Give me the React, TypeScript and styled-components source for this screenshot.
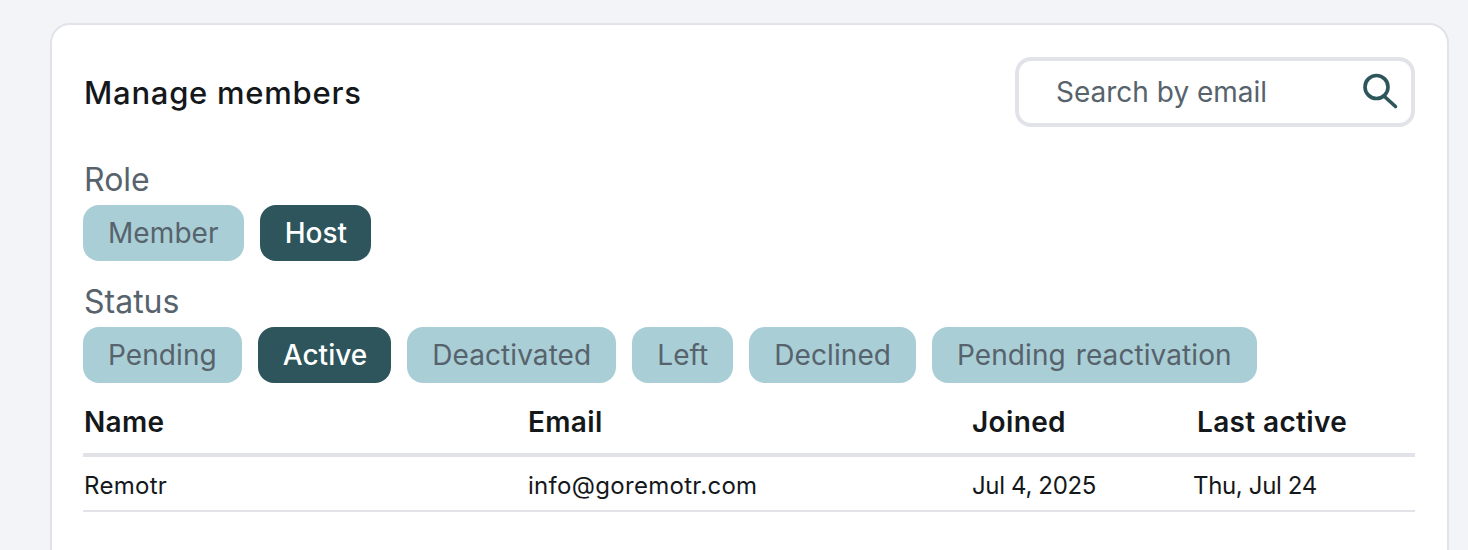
import React from "react";
import styled, { createGlobalStyle } from "styled-components";

const Global = createGlobalStyle`
  html, body { margin: 0; padding: 0; background: #f2f4f8; height: 550px; overflow: hidden; }
  body { font-family: Inter, "Noto Sans", sans-serif; }
`;
const Page = styled.div`
  padding: 23px 19px 0 50px;
  height: 527px;
  overflow: hidden;
`;
const Card = styled.section`
  box-sizing: border-box;
  height: 600px;
  background: #fff;
  border: 2px solid #e1e3e9;
  border-radius: 20px;
  padding: 32px 32px 0 31px;
`;
const Header = styled.header`
  display: flex;
  justify-content: space-between;
  align-items: center;
  height: 70px;
`;
const Title = styled.h1`
  margin: 2px 0 0 1px;
  font-size: 31px;
  line-height: 36px;
  font-weight: 500;
  letter-spacing: 0.75px;
  color: #14181b;
`;
const Search = styled.div`
  box-sizing: border-box;
  width: 400px;
  height: 70px;
  border: 4px solid #e1e3e9;
  border-radius: 16px;
  display: flex;
  align-items: center;
  justify-content: space-between;
  padding: 0 14px 0 37px;
`;
const SearchIcon = styled.svg`
  flex: none;
  overflow: visible;
`;
const Placeholder = styled.span`
  font-size: 28px;
  color: #57636c;
`;
const FilterLabel = styled.div`
  margin: 0 0 0 1px;
  font-size: 32px;
  line-height: 36px;
  color: #57636c;
`;
const Filter = styled.div<{ $top: number }>`
  margin-top: ${(p) => p.$top}px;
`;
const Chips = styled.div`
  display: flex;
  gap: 16px;
  margin-top: 7px;
`;
const Chip = styled.div<{ $on?: boolean }>`
  height: 56px;
  display: flex;
  align-items: center;
  padding: ${(p) => (p.$on ? "0 24px 0 25px" : "0 25px")};
  border-radius: 16px;
  font-size: 28px;
  letter-spacing: ${(p) => (p.$on ? 0 : 0.08)}px;
  word-spacing: 2px;
  background: ${(p) => (p.$on ? "#2d555b" : "#a9ced6")};
  color: ${(p) => (p.$on ? "#fff" : "#57636c")};
  font-weight: ${(p) => (p.$on ? 500 : 400)};
`;
const Row = styled.div<{ $cols: string; $head?: boolean }>`
  display: grid;
  grid-template-columns: ${(p) => p.$cols};
  align-items: center;
  padding-left: 1px;
  padding-top: ${(p) => (p.$head ? 7 : 4)}px;
  border-bottom: ${(p) => (p.$head ? "4px" : "2px")} solid #e1e3e9;
  height: ${(p) => (p.$head ? 74 : 55)}px;
  box-sizing: border-box;
  font-size: ${(p) => (p.$head ? 28 : 24)}px;
  font-weight: ${(p) => (p.$head ? 600 : 400)};
  letter-spacing: ${(p) => (p.$head ? 0.35 : 0.3)}px;
  color: #14181b;
`;
const DateCell = styled.span`
  letter-spacing: -0.35px;
`;

const roles = ["Member", "Host"];
const statuses = ["Pending", "Active", "Deactivated", "Left", "Declined", "Pending reactivation"];

export default function App() {
  return (
    <Page>
      <Global />
      <Card>
        <Header>
          <Title>Manage members</Title>
          <Search>
            <Placeholder>Search by email</Placeholder>
            <SearchIcon width="36" height="36" viewBox="0 0 36 36" fill="none" stroke="#2d555b" strokeWidth="3.6" strokeLinecap="round">
              <circle cx="15.5" cy="13" r="11.5" />
              <path d="M24 23L34.5 32.5" />
            </SearchIcon>
          </Search>
        </Header>
        <Filter $top={35}>
          <FilterLabel>Role</FilterLabel>
          <Chips>{roles.map((r) => <Chip key={r} $on={r === "Host"}>{r}</Chip>)}</Chips>
        </Filter>
        <Filter $top={23}>
          <FilterLabel>Status</FilterLabel>
          <Chips>{statuses.map((s) => <Chip key={s} $on={s === "Active"}>{s}</Chip>)}</Chips>
        </Filter>
        <Row $head $cols="444px 444px 225px 1fr">
          <span>Name</span><span>Email</span><span>Joined</span><span>Last active</span>
        </Row>
        <Row $cols="444px 444px 221px 1fr">
          <span>Remotr</span><span>info@goremotr.com</span><DateCell>Jul 4, 2025</DateCell><DateCell>Thu, Jul 24</DateCell>
        </Row>
      </Card>
    </Page>
  );
}
